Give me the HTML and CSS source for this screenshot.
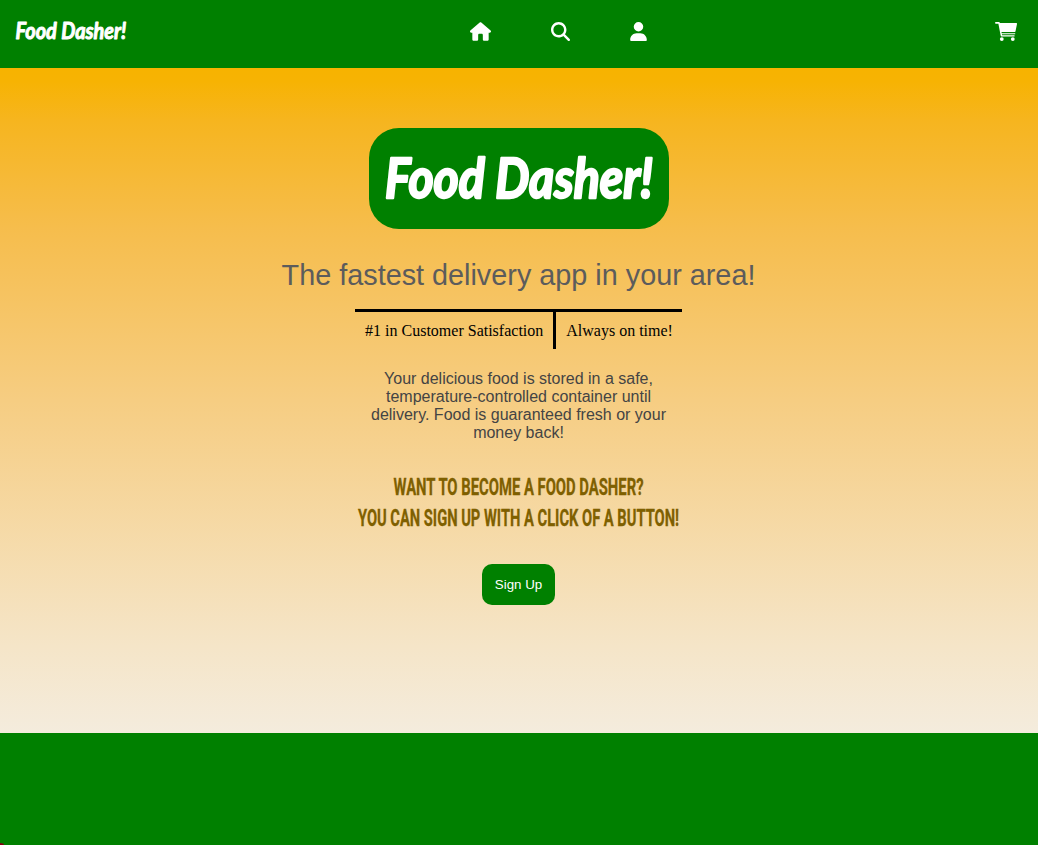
FILE: index.html
```html
<!DOCTYPE html>
<html lang="en">
<head>
<meta charset="utf-8">
<title>Food Dasher!</title>
<link rel="stylesheet" href="styles.css">
</head>
<body>
<header class="navbar">
  <a class="brand"><svg class="brand-text" viewBox="0 0 300 101"><text class="script" x="16" y="69.500" textLength="268" lengthAdjust="spacingAndGlyphs">Food Dasher!</text></svg></a>
  <nav class="links">
    <svg class="icon home" viewBox="0 0 576 512"><path d="M575.8 255.5c0 18-15 32.100-32 32.100h-32l.7 160.200c0 2.700-.2 5.400-.5 8.100V472c0 22.100-17.900 40-40 40H392c-22.100 0-40-17.900-40-40V352c0-17.700-14.300-32-32-32h-64c-17.700 0-32 14.300-32 32v120c0 22.100-17.900 40-40 40h-80c-22.100 0-40-17.900-40-40V287.600H32c-18 0-32-14-32-32.100 0-9 3-17 10-24L266.400 8c7-7 15-8 22-8s15 2 21 7l255.400 224.500c8 7 12 15 11 24z"/></svg>
    <svg class="icon search" viewBox="0 0 512 512"><path d="M416 208c0 45.900-14.900 88.300-40 122.700l126.600 126.700c12.500 12.500 12.500 32.800 0 45.300s-32.800 12.500-45.300 0L330.700 376c-34.400 25.200-76.800 40-122.700 40C93.100 416 0 322.900 0 208S93.100 0 208 0s208 93.100 208 208zM208 352a144 144 0 1 0 0-288 144 144 0 1 0 0 288z"/></svg>
    <svg class="icon user" viewBox="0 0 448 512"><path d="M224 256a128 128 0 1 0 0-256 128 128 0 1 0 0 256zM174.300 304C77.700 304 0 381.700 0 478.300 0 498.700 13.300 512 29.700 512h388.600c16.400 0 29.700-13.300 29.700-29.700C448 381.700 370.300 304 273.700 304z"/></svg>
  </nav>
  <svg class="icon cart" viewBox="0 0 22 19"><path d="M.8 0H4c.4 0 .7.300.8.700l.1.300h16.300c.5 0 .9.400.8.900l-1.500 7.300c-.1.500-.5.900-1 .9H6.500l.2 1.100h13.500v1H6.900l.2 1h12.200c.5 0 .6 1.300 0 1.300H6.500c-.4 0-.7-.3-.8-.7L3.400 1.700H.8C-.2 1.700-.2 0 .8 0z"/><circle cx="6.800" cy="17.100" r="1.900"/><circle cx="17.800" cy="17.100" r="1.900"/></svg>
</header>
<main class="hero">
  <h1 class="logo"><svg class="logo-text" viewBox="0 0 300 101"><text class="script" x="16" y="69.500" textLength="268" lengthAdjust="spacingAndGlyphs">Food Dasher!</text></svg></h1>
  <h2 class="tagline">The fastest delivery app in your area!</h2>
  <div class="facts"><span class="fact first">#1 in Customer Satisfaction</span><span class="fact last">Always on time!</span></div>
  <p class="about">Your delicious food is stored in a safe, temperature-controlled container until delivery. Food is guaranteed fresh or your money back!</p>
  <h3 class="pitch"><svg class="pitch-text" viewBox="0 0 330 62"><text x="39.500" y="24" textLength="250" lengthAdjust="spacingAndGlyphs">WANT TO BECOME A FOOD DASHER?</text><text x="4" y="55" textLength="321" lengthAdjust="spacingAndGlyphs">YOU CAN SIGN UP WITH A CLICK OF A BUTTON!</text></svg></h3>
  <button class="signup">Sign Up</button>
</main>
<footer class="footer"><span class="corner"></span></footer>
</body>
</html>
```
FILE: styles.css
```css
* { box-sizing: border-box; }
body { margin: 0; height: 845px; display: flex; flex-direction: column; background: green; font-family: "Liberation Sans", Arial, sans-serif; }
svg { display: block; overflow: visible; }
.navbar { height: 68px; flex: none; background: green; display: grid; grid-template-columns: 1fr auto 1fr; align-items: start; padding: 0 21px 0 9px; }
.brand-text { width: 124px; height: 42px; margin-top: 10px; }
.script { font: italic 700 55px Lato, sans-serif; fill: #fff; stroke: #fff; stroke-width: 2.4; stroke-linejoin: round; }
.links { display: flex; gap: 60px; padding-top: 22px; margin-left: 91px; }
.icon { height: 19px; fill: #fff; }
.home { width: 21px; }
.search { width: 19px; }
.user { width: 17px; }
.cart { width: 22px; margin-top: 22px; justify-self: end; }
.hero { height: 665px; flex: none; padding-top: 60px; display: flex; flex-direction: column; align-items: center; background: linear-gradient(180deg, #f7b300 0%, #f7b303 2%, #f6b51f 8%, #f6bd4c 24%, #f6cd82 50%, #f5e5c8 87%, #f4ecdd 100%); }
.logo { margin: 0; width: 300px; height: 101px; border-radius: 30px; background: green; }
.logo-text { width: 300px; height: 101px; }
.tagline { margin: 29px 1px 0 0; font-size: 28.8px; line-height: 34px; font-weight: 400; color: #5c5c5c; white-space: nowrap; }
.facts { margin: 17px 1px 0 0; display: flex; border-top: 3px solid #000; font: 16px/18px "Liberation Serif", "Times New Roman", serif; }
.fact { padding: 10px; height: 37px; white-space: nowrap; }
.first { border-right: 3px solid #000; }
.last { padding-right: 9px; }
.about { width: 300px; margin: 21px 1px 0 0; font-size: 16px; line-height: 18px; color: #444; text-align: center; }
.pitch { margin: 29px 1px 0 0; }
.pitch-text { width: 330px; height: 62px; font: 700 24px Roboto, sans-serif; fill: #7f6000; stroke: #7f6000; stroke-width: .3; }
.signup { margin: 31px 1px 0 0; width: 73px; height: 41px; padding: 0; border: 0; border-radius: 10px; background: green; color: #fff; font: 13.333px "Liberation Sans", Arial, sans-serif; }
.footer { flex: 1; background: green; display: flex; align-items: flex-end; }
.corner { width: 4px; height: 2px; border-top-right-radius: 4px 2px; background: #800010; }
```
